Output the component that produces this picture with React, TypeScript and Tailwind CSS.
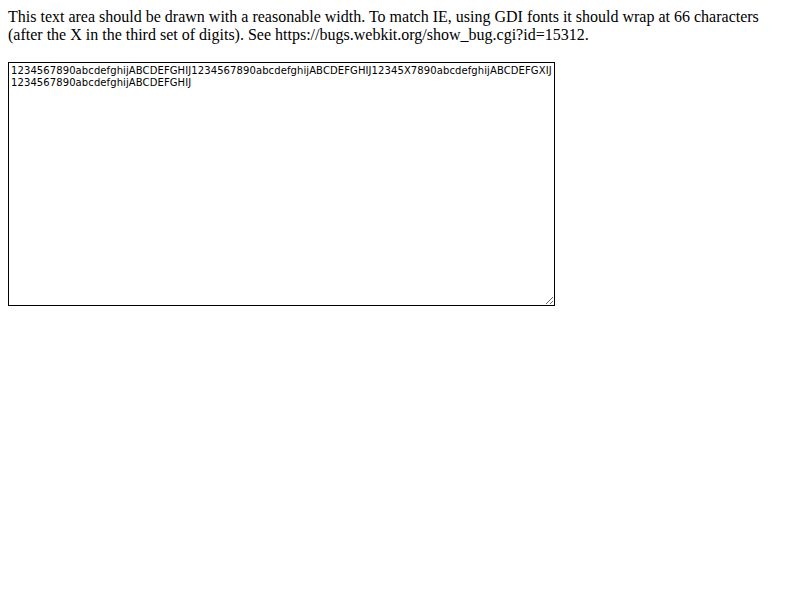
export default function App() {
    const content =
        '1234567890abcdefghijABCDEFGHIJ1234567890abcdefghijABCDEFGHIJ12345X7890abcdefghijABCDEFGXIJ\n1234567890abcdefghijABCDEFGHIJ';

    return (
        <div className="bg-white min-h-[600px] p-2 text-black">
            <p className="font-['Liberation_Serif',serif] text-[16px] leading-[18px]">
                This text area should be drawn with a reasonable width. To match IE, using GDI fonts it should wrap at 66 characters (after the X in the third set of digits). See https://bugs.webkit.org/show_bug.cgi?id=15312.
            </p>
            <div className="mt-[18px]">
                <textarea
                    readOnly
                    defaultValue={content}
                    className="block w-[547px] h-[244px] border border-black bg-white px-[2px] py-[2px] font-['DejaVu_Sans',sans-serif] text-[10px] leading-[12px] tracking-[0.1px] text-black whitespace-pre overflow-hidden resize focus:outline-none"
                />
            </div>
        </div>
    );
}
